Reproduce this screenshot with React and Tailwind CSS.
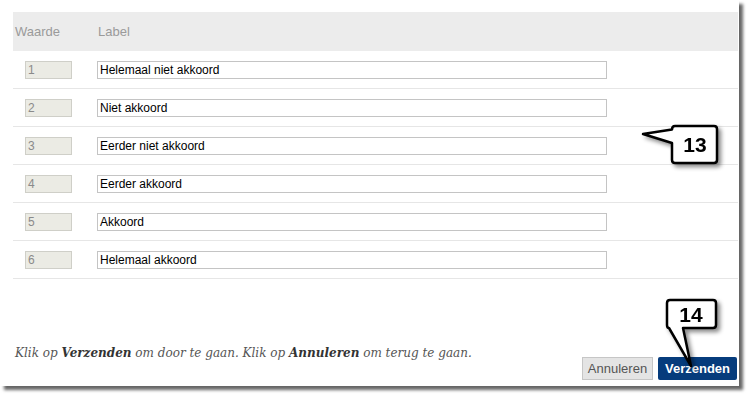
import React from "react";

const rows = [
  ["1", "Helemaal niet akkoord"],
  ["2", "Niet akkoord"],
  ["3", "Eerder niet akkoord"],
  ["4", "Eerder akkoord"],
  ["5", "Akkoord"],
  ["6", "Helemaal akkoord"],
];

const sans = { fontFamily: '"Liberation Sans", Arial, sans-serif' };

export default function App() {
  return (
    <div className="relative w-[750px] h-[395px] bg-white overflow-hidden" style={sans}>
      <div className="w-[739px] h-[386px] bg-white shadow-[4px_4px_3px_rgba(0,0,0,0.6)] pt-[12px] pl-[13px] pr-[1px] flex flex-col">
        <div className="h-[39px] bg-[#ececec] flex items-center text-[13px] text-[#9a9a9a]">
          <div className="w-[84px] pl-[2px]">Waarde</div>
          <div className="pl-[1px]">Label</div>
        </div>
        {rows.map(([v, l]) => (
          <div key={v} className="h-[38px] border-b border-[#e6e6e6] flex items-center">
            <div className="w-[84px] pl-[12px]">
              <div className="w-[47px] h-[18px] border border-[#cfcfc8] bg-[#ebebe4] text-[12px] leading-[16px] text-[#8a8a8a] pl-[2px]">
                {v}
              </div>
            </div>
            <div className="w-[510px] h-[18px] border border-[#c4c4c4] bg-white text-[12px] leading-[16px] text-black pl-[2px]">
              {l}
            </div>
          </div>
        ))}
        <div className="flex-1" />
        <div className="flex items-end justify-between pr-[1px] pb-[6px]">
          <div
            className="pl-[2px] mb-[19px] text-[12px] leading-[16px] italic text-[#555]"
            style={{ fontFamily: '"DejaVu Serif", Georgia, serif' }}
          >
            Klik op <b className="text-[#333]">Verzenden</b> om door te gaan. Klik op{" "}
            <b className="text-[#333]">Annuleren</b> om terug te gaan.
          </div>
          <div className="flex gap-[5px]">
            <div className="w-[71px] h-[23px] border border-[#c6c6c6] bg-[#e4e4e4] text-[#555] text-[13px] flex items-center justify-center">
              Annuleren
            </div>
            <div className="w-[79px] h-[23px] bg-[#063c7c] rounded-[2px] text-white font-bold text-[13px] flex items-center justify-center">
              Verzenden
            </div>
          </div>
        </div>
      </div>

      <svg
        className="absolute left-0 top-0 pointer-events-none"
        width="750"
        height="395"
        viewBox="0 0 750 395"
        style={{ filter: "drop-shadow(3px 3px 2px rgba(0,0,0,0.45))" }}
      >
        <path
          d="M675,126 H714 Q717,126 717,129 V160 Q717,163 714,163 H675 Q672,163 672,160 V143 L643,134 L672,129.5 Q672,126 675,126 Z"
          fill="white"
          stroke="black"
          strokeWidth="2.5"
          strokeLinejoin="round"
        />
        <text x="695" y="152" textAnchor="middle" fontSize="21" fontWeight="bold" fill="black" fontFamily="Liberation Sans, Arial, sans-serif">
          13
        </text>
        <path
          d="M670,300 H713 Q716,300 716,303 V325 Q716,328 713,328 H683 L691,366 L669,328 Q667,328 667,325 V303 Q667,300 670,300 Z"
          fill="white"
          stroke="black"
          strokeWidth="2.5"
          strokeLinejoin="round"
        />
        <text x="691" y="322" textAnchor="middle" fontSize="21" fontWeight="bold" fill="black" fontFamily="Liberation Sans, Arial, sans-serif">
          14
        </text>
      </svg>
    </div>
  );
}
